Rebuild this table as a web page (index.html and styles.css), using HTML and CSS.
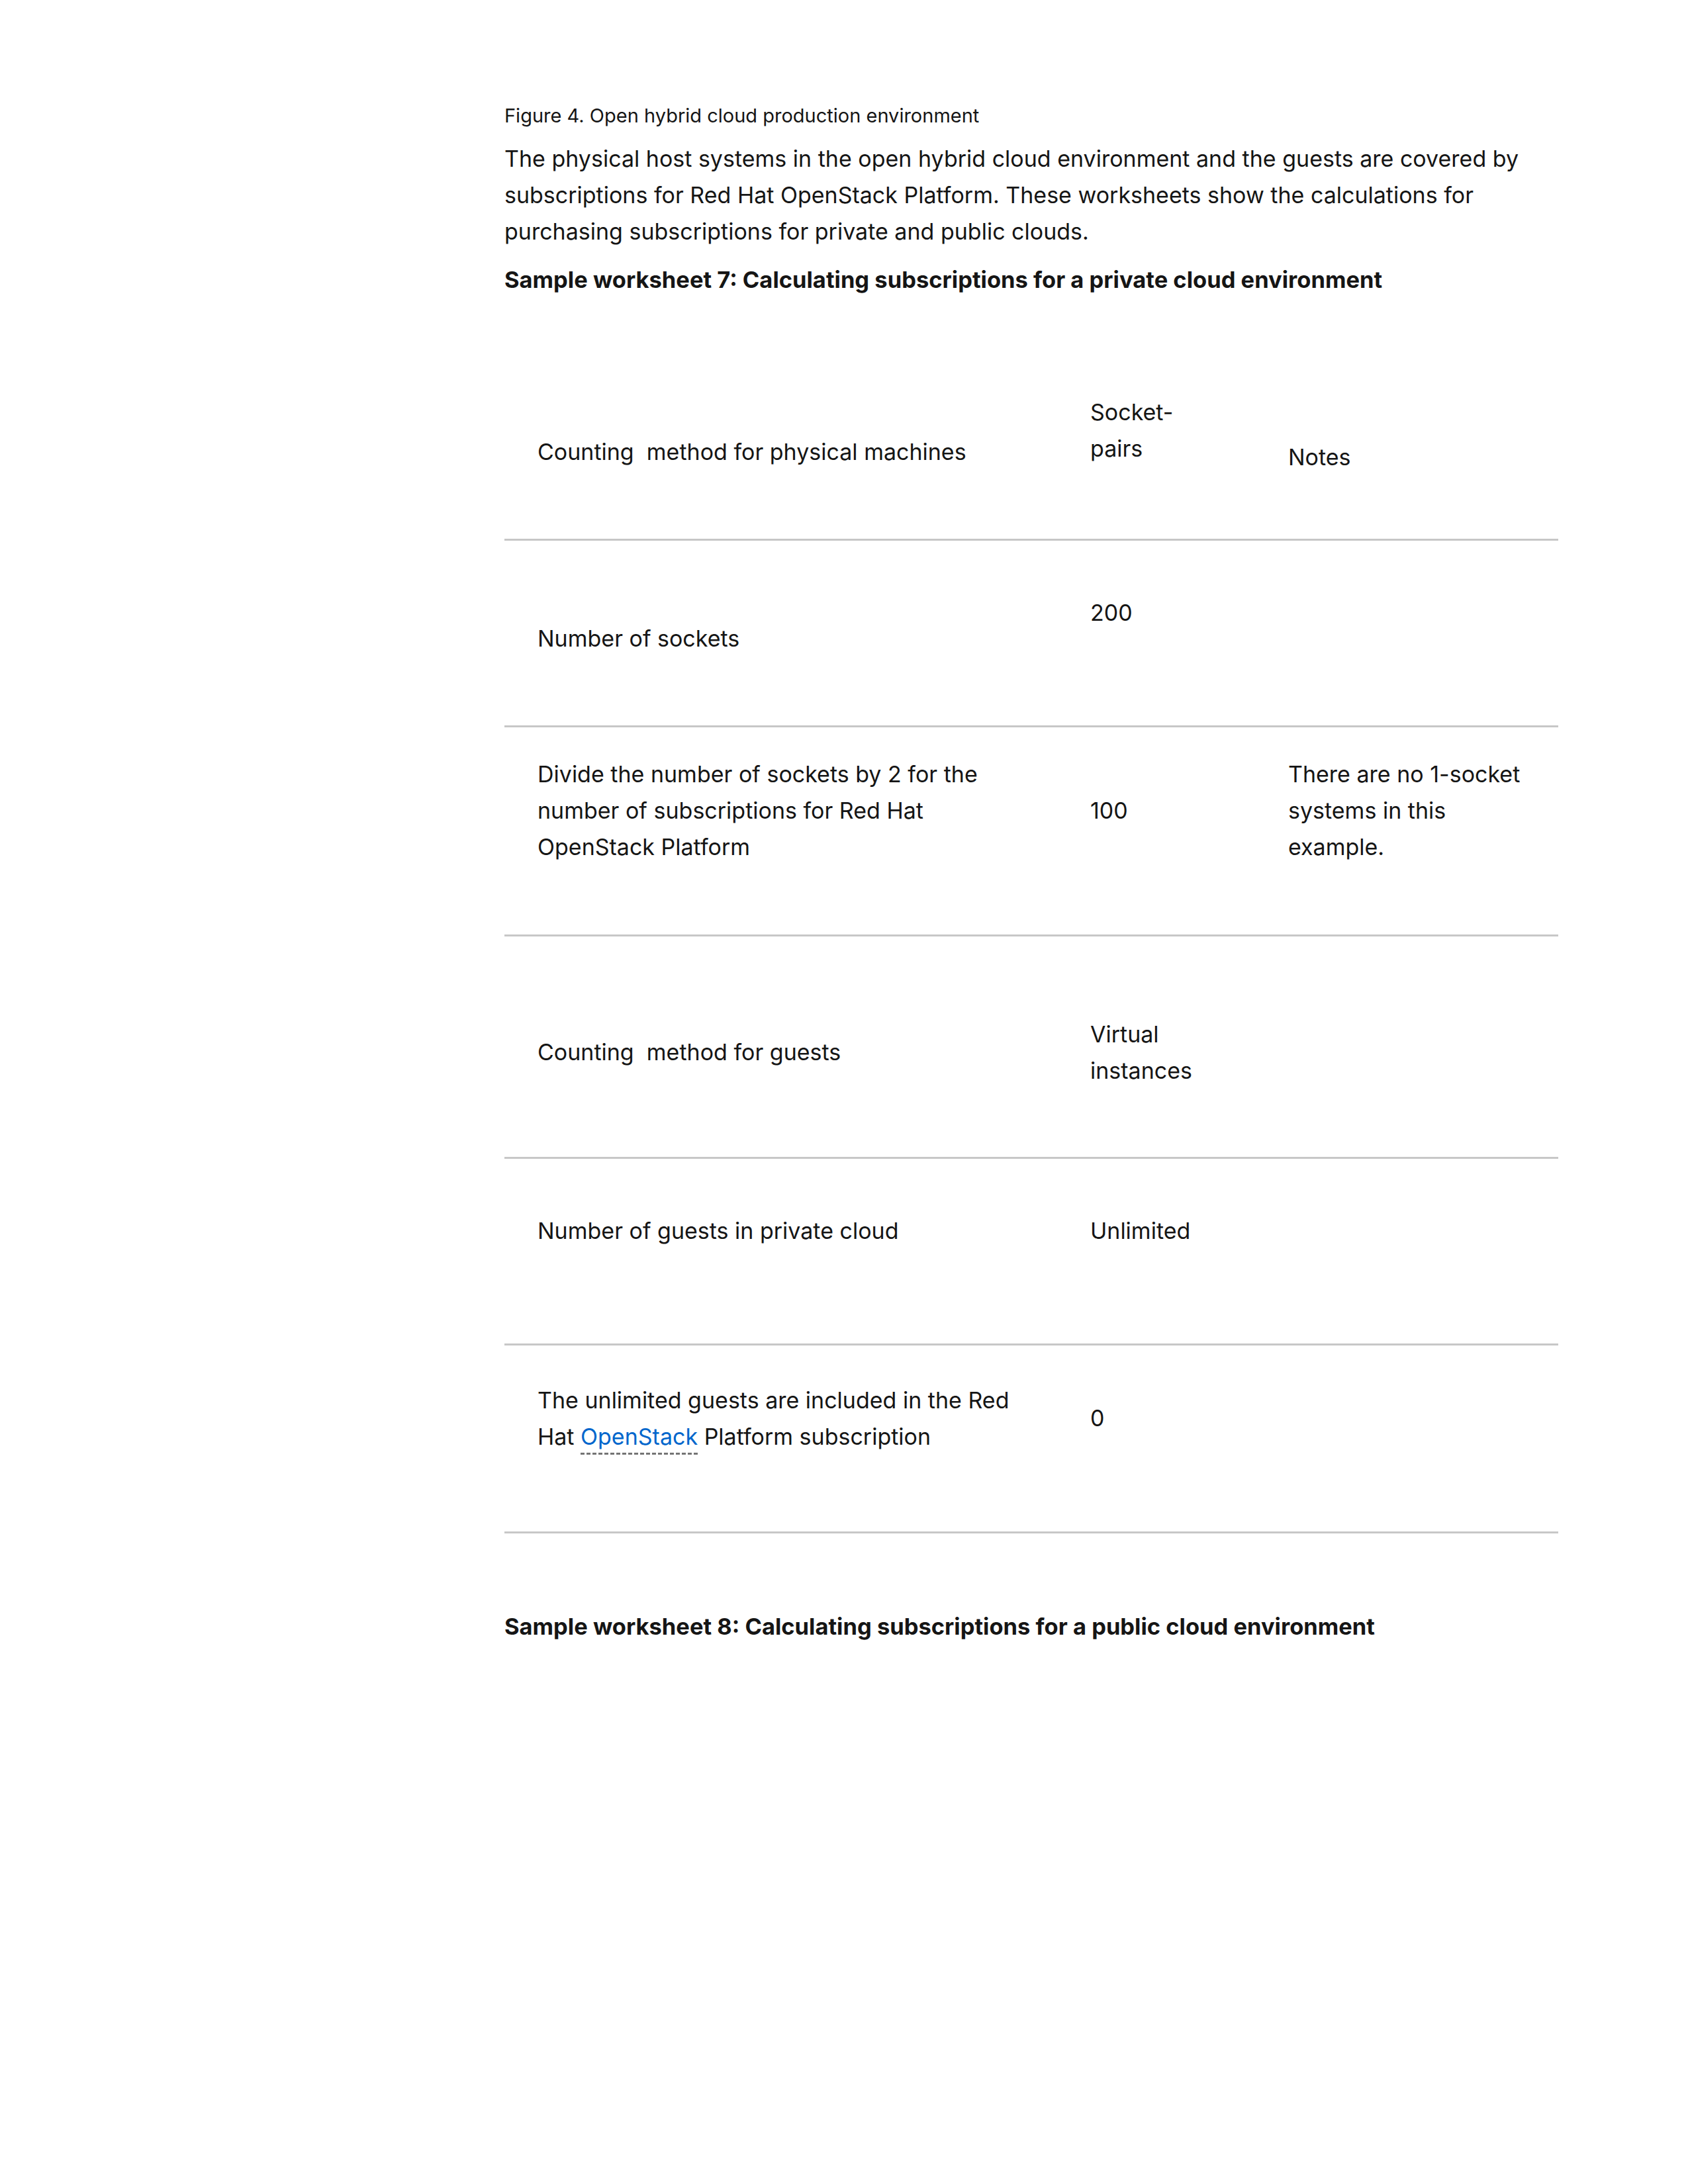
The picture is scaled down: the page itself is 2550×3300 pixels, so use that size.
FILE: index.html
```html
<!DOCTYPE html>
<html>
<head>
	<title>Open hybrid cloud worksheets</title>
	<link rel="stylesheet" href="styles.css">
</head>
<body>
	<div class="page">
		<p class="caption">Figure 4. Open hybrid cloud production environment</p>
		<p class="para">The physical host systems in the open hybrid cloud environment and the guests are covered by subscriptions for Red Hat OpenStack Platform. These worksheets show the calculations for purchasing subscriptions for private and public clouds.</p>
		<h3 class="sheet-title">Sample worksheet 7: Calculating subscriptions for a private cloud environment</h3>

		<div class="worksheet">
			<div class="row row-head">
				<div class="cell col-a head-a"><div>Counting&nbsp; method for physical machines</div></div>
				<div class="cell col-b"><div>Socket-pairs</div></div>
				<div class="cell col-c head-c"><div>Notes</div></div>
			</div>
			<div class="row row-short">
				<div class="cell col-a low"><div>Number of sockets</div></div>
				<div class="cell col-b"><div>200</div></div>
				<div class="cell col-c"></div>
			</div>
			<div class="row row-mid">
				<div class="cell col-a"><div>Divide the number of sockets by 2 for the number of subscriptions for Red Hat OpenStack Platform</div></div>
				<div class="cell col-b"><div>100</div></div>
				<div class="cell col-c"><div>There are no 1-socket systems in this example.</div></div>
			</div>
			<div class="row row-tall">
				<div class="cell col-a low"><div>Counting&nbsp; method for guests</div></div>
				<div class="cell col-b low"><div>Virtual instances</div></div>
				<div class="cell col-c"></div>
			</div>
			<div class="row row-short">
				<div class="cell col-a"><div>Number of guests in private cloud</div></div>
				<div class="cell col-b"><div>Unlimited</div></div>
				<div class="cell col-c"></div>
			</div>
			<div class="row row-short2">
				<div class="cell col-a"><div>The unlimited guests are included in the Red Hat <a class="term" href="#">OpenStack</a> Platform subscription</div></div>
				<div class="cell col-b"><div>0</div></div>
				<div class="cell col-c"></div>
			</div>
		</div>

		<h3 class="sheet-title next">Sample worksheet 8: Calculating subscriptions for a public cloud environment</h3>
	</div>
</body>
</html>
```

FILE: styles.css
```css
body {
	margin: 0;
	background: #fff;
	color: #151515;
	font-family: Inter, "Liberation Sans", sans-serif;
}

.page {
	width: 1592px;
	padding: 155px 0 0 762px;
}

.caption {
	margin: 0;
	font-size: 29px;
	line-height: 40px;
}

.para {
	margin: 17px 0 0;
	font-size: 34px;
	line-height: 55px;
}

.sheet-title {
	margin: 18px 0 0;
	font-size: 34.5px;
	line-height: 55px;
	font-weight: 700;
}

.sheet-title.next {
	margin-top: 113px;
}

.worksheet {
	margin-top: 97px;
	font-size: 34px;
	line-height: 55px;
}

.row {
	display: grid;
	grid-template-columns: 835px 299px 1fr;
	border-bottom: 3px solid #c7c7c7;
	box-sizing: border-box;
}

.row-head { height: 270px; }
.row-short { height: 282px; }
.row-mid { height: 316px; }
.row-tall { height: 336px; }
.row-short2 { height: 284px; }

.cell {
	display: flex;
	align-items: center;
	padding: 0 0 62px 50px;
}

.col-a { padding-right: 50px; }
.col-b { padding-right: 80px; }
.col-c { padding-right: 40px; }

.cell.low {
	padding-top: 16px;
	padding-bottom: 0;
}

.cell.head-a {
	padding-top: 4px;
	padding-bottom: 0;
}

.cell.head-c {
	padding-top: 20px;
	padding-bottom: 0;
}

.term {
	color: #0066cc;
	text-decoration: underline dashed #757575 3px;
	text-underline-offset: 12px;
}
```
